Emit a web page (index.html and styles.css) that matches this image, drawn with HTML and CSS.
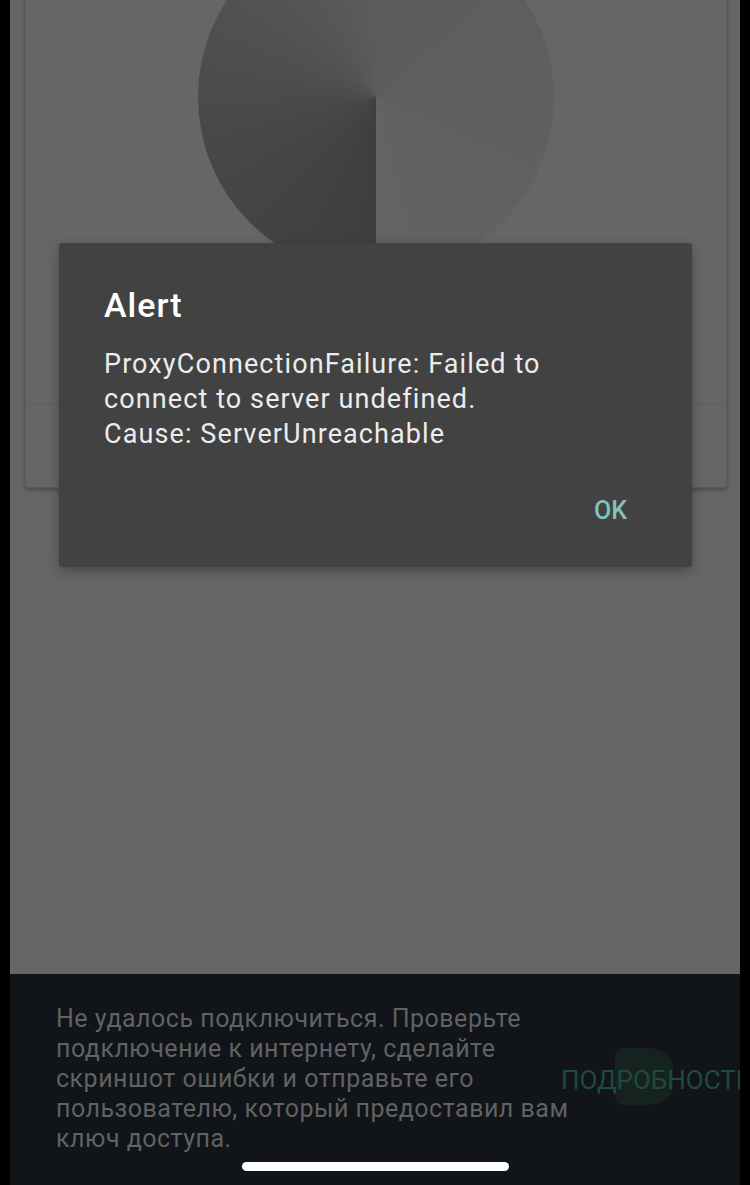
FILE: index.html
```html
<!DOCTYPE html>
<html lang="ru">
<head>
<meta charset="utf-8">
<title>Alert</title>
<link rel="stylesheet" href="styles.css">
</head>
<body>
<div class="screen">
  <main class="content">
    <section class="card">
      <div class="card-media">
        <div class="spinner"></div>
      </div>
      <div class="card-footer"></div>
    </section>
  </main>
  <div class="dialog" role="alertdialog">
    <h2 class="dialog-title">Alert</h2>
    <p class="dialog-body">ProxyConnectionFailure: Failed to<br>connect to server undefined.<br>Cause: ServerUnreachable</p>
    <div class="dialog-actions">
      <button class="dialog-btn">OK</button>
    </div>
  </div>
  <footer class="snackbar">
    <p class="snack-text">Не удалось подключиться. Проверьте<br>подключение к интернету, сделайте<br>скриншот ошибки и отправьте его<br>пользователю, который предоставил вам<br>ключ доступа.</p>
    <div class="snack-action">
      <span class="snack-ripple"></span>
      <span class="snack-label">ПОДРОБНОСТИ</span>
    </div>
  </footer>
  <div class="home-indicator"></div>
</div>
</body>
</html>
```
FILE: styles.css
```css
* { box-sizing: border-box; }
html, body {
  margin: 0;
  padding: 0;
  background: #000;
}
body {
  font-family: Roboto, "Noto Sans", "Liberation Sans", sans-serif;
}
.screen {
  position: relative;
  width: 730px;
  height: 1185px;
  margin: 0 10px;
  background: #666666;
  overflow: hidden;
  display: flex;
  flex-direction: column;
}
.content {
  flex: 1;
  overflow: hidden;
}
.card {
  margin: -4px 13px 0 15px;
  background: #666666;
  border: 1px solid #5a5a5a;
  border-radius: 3px;
  box-shadow: 0 2px 4px rgba(0, 0, 0, 0.28);
}
.card-media {
  height: 408px;
  overflow: hidden;
  border-bottom: 1px solid #5e5e5e;
}
.spinner {
  width: 356px;
  height: 356px;
  margin: -78px auto 0;
  border-radius: 50%;
  background: conic-gradient(#5c5c5c 0deg, #5f5f5f 90deg, #636363 180deg, #3e3e3e 180deg, #474747 250deg, #535353 310deg, #5c5c5c 360deg);
}
.card-footer {
  height: 82px;
}
.dialog {
  position: absolute;
  left: 49px;
  top: 243px;
  width: 633px;
  height: 324px;
  background: #424242;
  border-radius: 3px;
  box-shadow: 0 4px 12px rgba(0, 0, 0, 0.3);
  padding: 42px 45px 0 45px;
  display: flex;
  flex-direction: column;
}
.dialog-title {
  margin: 0;
  font-size: 34px;
  line-height: 40px;
  letter-spacing: 1px;
  font-weight: 500;
  color: #ffffff;
}
.dialog-body {
  margin: 22px 0 0;
  font-size: 27px;
  line-height: 35px;
  letter-spacing: 1.1px;
  color: #ececec;
}
.dialog-actions {
  display: flex;
  justify-content: flex-end;
  margin-top: 41px;
}
.dialog-btn {
  font-family: inherit;
  background: none;
  border: 0;
  padding: 0 20px 0 0;
  margin: 0;
  font-size: 25px;
  line-height: 36px;
  font-weight: 500;
  color: #80c4bb;
}
.snackbar {
  height: 211px;
  background: #111418;
  display: flex;
  align-items: flex-start;
  padding: 30px 0 0 46px;
}
.snack-text {
  margin: 0;
  flex: 0 0 auto;
  width: 505px;
  white-space: nowrap;
  font-size: 25px;
  line-height: 30px;
  letter-spacing: 0.5px;
  color: #606263;
}
.snack-action {
  position: relative;
  margin-top: 61px;
  flex: 0 0 auto;
}
.snack-ripple {
  position: absolute;
  left: 54px;
  top: -17px;
  width: 58px;
  height: 57px;
  background: #16221e;
  border-radius: 8px 26px 26px 8px / 8px 18px 18px 8px;
}
.snack-label {
  position: relative;
  font-size: 26px;
  line-height: 30px;
  letter-spacing: 0;
  color: #1f4a3f;
  white-space: nowrap;
}
.home-indicator {
  position: absolute;
  left: 232px;
  top: 1162px;
  width: 267px;
  height: 9px;
  border-radius: 5px;
  background: #ffffff;
}
```
